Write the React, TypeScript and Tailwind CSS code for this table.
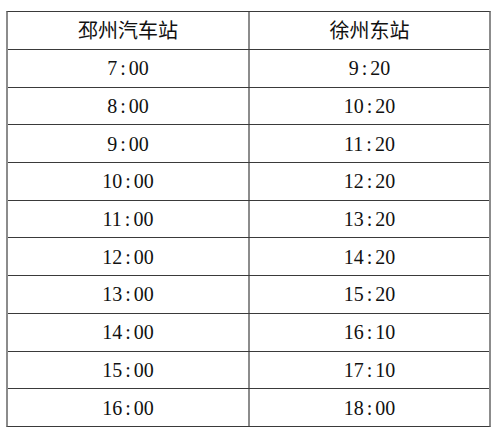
const rows: [string, string][] = [
  ["7:00", "9:20"],
  ["8:00", "10:20"],
  ["9:00", "11:20"],
  ["10:00", "12:20"],
  ["11:00", "13:20"],
  ["12:00", "14:20"],
  ["13:00", "15:20"],
  ["14:00", "16:10"],
  ["15:00", "17:10"],
  ["16:00", "18:00"],
];

function Time({ value }: { value: string }) {
  const [h, m] = value.split(":");
  return (
    <span>
      {h}
      <span className="px-[3px]">:</span>
      {m}
    </span>
  );
}

export default function App() {
  return (
    <div className="h-[437px] w-[500px] bg-white pl-[6px] pt-[11px] text-[20px] text-[#111] [font-family:'Liberation_Serif','Noto_Sans_CJK_SC',serif]">
      <div className="w-[485px] border-l-2 border-r-2 border-l-[#8c8c8c] border-r-[#8c8c8c] border-t border-b border-t-[#3a3a3a] border-b-[#3a3a3a]">
        {/* header */}
        <div className="flex h-[37px]">
          <div className="flex w-[242px] items-center justify-center border-r-2 border-r-[#8c8c8c]">
            邳州汽车站
          </div>
          <div className="flex flex-1 items-center justify-center">徐州东站</div>
        </div>
        {rows.map(([a, b]) => (
          <div key={a} className="flex h-[37.7px] border-t border-t-[#3a3a3a]">
            <div className="flex w-[242px] items-center justify-center border-r-2 border-r-[#8c8c8c]">
              <Time value={a} />
            </div>
            <div className="flex flex-1 items-center justify-center">
              <Time value={b} />
            </div>
          </div>
        ))}
      </div>
    </div>
  );
}
